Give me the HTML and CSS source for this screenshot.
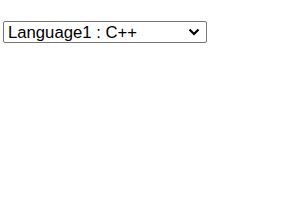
FILE: index.html
```html
<!DOCTYPE html>
<html>
<head>
	<meta charset="utf-8">
	<title>Language</title>
	<link rel="stylesheet" href="styles.css">
</head>
<body>
	<div class="wrap">
		<div class="select-box">
			<select id="lang" class="lang-select">
				<option value="cpp">Language1 : C++</option>
				<option value="java">Language2 : Java</option>
				<option value="py">Language3 : Python</option>
			</select>
			<!-- стрелка списка -->
			<svg class="arrow" width="12" height="8" viewBox="0 0 12 8">
				<path d="M1.5 1.5 L6 6 L10.5 1.5" fill="none" stroke="#000" stroke-width="2.2"/>
			</svg>
		</div>
	</div>
</body>
</html>
```

FILE: styles.css
```css
body {
	margin: 0;
	background: #fff;
}

.wrap {
	padding: 21px 0 0 3px;
}

.select-box {
	position: relative;
	display: inline-block;
}

.lang-select {
	appearance: none;
	-webkit-appearance: none;
	display: block;
	width: 204px;
	height: 22px;
	margin: 0;
	padding: 0 0 0 4px;
	border: 1px solid #767676;
	border-radius: 2px;
	background: #fff;
	font-family: "Liberation Sans", Arial, sans-serif;
	font-size: 16.7px;
	color: #000;
}

.arrow {
	position: absolute;
	left: 185px;
	top: 7px;
	pointer-events: none;
}
```
